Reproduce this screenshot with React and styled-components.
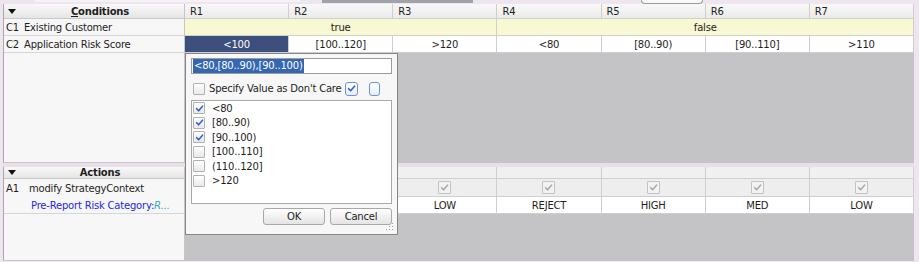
import React from "react";
import styled, { createGlobalStyle } from "styled-components";

const Global = createGlobalStyle`
  html, body { margin: 0; padding: 0; background: #ede6ee; }
  body {
    font-family: "DejaVu Sans", "Noto Sans", sans-serif;
    font-size: 10px;
    letter-spacing: -0.2px;
    color: #1e1e1e;
  }
  #root { width: 919px; height: 262px; overflow: hidden; position: relative; }
`;

const Page = styled.div`
  width: 919px;
  height: 262px;
  position: relative;
  background: #ede6ee;
`;

const TopStrip = styled.div`
  height: 4px;
  display: flex;
  align-items: flex-start;
`;

const StripBar = styled.div`
  margin-left: ${(p) => p.$ml}px;
  width: ${(p) => p.$w}px;
  height: ${(p) => p.$h || 3}px;
  background: ${(p) => p.$bg};
  border: ${(p) => p.$border || "none"};
  border-top: none;
  border-radius: ${(p) => p.$r || 0};
  box-sizing: border-box;
`;

const Frame = styled.div`
  margin-left: 3px;
  width: 911px;
  display: flex;
  flex-direction: column;
`;

const Section = styled.div`
  display: flex;
  height: ${(p) => p.$h}px;
  box-sizing: border-box;
`;

const Gap = styled.div`
  height: 4px;
  background: #eadfe9;
`;

const LeftPanel = styled.div`
  width: 182px;
  flex: none;
  box-sizing: border-box;
  background: #f7f7f7;
  border-left: 1px solid #a9a9a9;
  border-right: 1px solid #c6c6c6;
  border-bottom: 1px solid #c6c6c6;
  display: flex;
  flex-direction: column;
`;

const RightPanel = styled.div`
  flex: 1;
  background: #c4c3c6;
  display: flex;
  flex-direction: column;
`;

const PanelHeader = styled.div`
  height: ${(p) => p.$h}px;
  flex: none;
  box-sizing: border-box;
  background: linear-gradient(#f8f8f8, #e6e6e6);
  border-bottom: 1px solid #c9c9c9;
  display: flex;
  align-items: center;
  padding-left: 4px;
`;

const Triangle = styled.span`
  width: 0;
  height: 0;
  border-left: 4px solid transparent;
  border-right: 4px solid transparent;
  border-top: 5px solid #111;
  flex: none;
`;

const HeaderLabel = styled.span`
  flex: 1;
  text-align: center;
  font-weight: bold;
  padding-right: ${(p) => p.$pr || 0}px;
`;

const Mnemonic = styled.span`
  text-decoration: underline;
`;

const LeftRow = styled.div`
  height: ${(p) => p.$h || 17}px;
  flex: none;
  box-sizing: border-box;
  border-bottom: ${(p) => (p.$noLine ? "none" : "1px solid #d6d6d6")};
  display: flex;
  align-items: center;
  padding-left: ${(p) => p.$pl || 2}px;
  white-space: nowrap;
`;

const Code = styled.span`
  width: ${(p) => p.$w}px;
  flex: none;
`;

const BlueText = styled.span`
  color: #2626e6;
`;

const TealText = styled.span`
  color: #35a9c4;
  font-style: italic;
`;

const Grid = styled.div`
  display: grid;
  grid-template-columns: repeat(7, 1fr);
  height: ${(p) => p.$h}px;
  flex: none;
  box-sizing: border-box;
  background: ${(p) => p.$bg};
  border-bottom: 1px solid #cfcfcf;
`;

const Cell = styled.div`
  grid-column: span ${(p) => p.$span || 1};
  border-right: 1px solid #cfcfcf;
  display: flex;
  align-items: center;
  justify-content: ${(p) => (p.$left ? "flex-start" : "center")};
  padding-left: ${(p) => (p.$left ? 5 : 0)}px;
  background: ${(p) => (p.$selected ? "#3d4f7d" : "transparent")};
  color: ${(p) => (p.$selected ? "#ffffff" : "#1e1e1e")};
  white-space: nowrap;
  overflow: hidden;
  min-width: 0;
`;

const MiniBox = styled.span`
  width: ${(p) => p.$size || 12}px;
  height: ${(p) => p.$size || 12}px;
  box-sizing: border-box;
  flex: none;
  border: 1px solid ${(p) => (p.$disabled ? "#c2c2c2" : "#b2b2b2")};
  border-radius: 1px;
  background: ${(p) =>
    p.$disabled ? "#f3f3f3" : "linear-gradient(#ffffff, #e9e9e9)"};
  display: inline-flex;
  align-items: center;
  justify-content: center;
`;

const Check = ({ color = "#2f5fd6", size = 10 }) => (
  <svg width={size} height={size} viewBox="0 0 10 10">
    <path
      d="M1.8 5.2 L4 7.6 L8.4 2.4"
      fill="none"
      stroke={color}
      strokeWidth="1.7"
      strokeLinecap="round"
      strokeLinejoin="round"
    />
  </svg>
);

/* ---------- popup ---------- */

const Popup = styled.div`
  position: absolute;
  left: 185px;
  top: 53px;
  width: 213px;
  height: 182px;
  box-sizing: border-box;
  background: #f7f7f7;
  border: 1px solid #858585;
  padding: 4px 5px 0 5px;
  display: flex;
  flex-direction: column;
`;

const TextBox = styled.div`
  height: 16px;
  box-sizing: border-box;
  border: 1px solid #9c9c9c;
  background: #fff;
  display: flex;
  align-items: center;
  padding-left: 1px;
`;

const Selected = styled.span`
  background: #3566b2;
  color: #fff;
  padding: 1px 1px;
  line-height: 12px;
`;

const SpecifyRow = styled.div`
  margin-top: 8px;
  height: 13px;
  display: flex;
  align-items: center;
  padding-left: 2px;
  gap: 4px;
`;

const SpecifyLabel = styled.span`
  flex: 1;
  white-space: nowrap;
`;

const ToolBtn = styled.span`
  width: ${(p) => p.$w}px;
  height: 14px;
  box-sizing: border-box;
  border: 1px solid #6e93d3;
  border-radius: 3px;
  background: linear-gradient(#ffffff, #e8eef8);
  display: inline-flex;
  align-items: center;
  justify-content: center;
  margin-right: ${(p) => p.$mr || 0}px;
`;

const ListBox = styled.div`
  margin-top: 5px;
  height: 104px;
  box-sizing: border-box;
  border: 1px solid #a9a9a9;
  background: #fff;
  padding-top: 0;
  display: flex;
  flex-direction: column;
`;

const ListItem = styled.div`
  height: 14.5px;
  flex: none;
  display: flex;
  align-items: center;
  padding-left: 1px;
  gap: 7px;
  white-space: nowrap;
`;

const ButtonRow = styled.div`
  margin-top: 4px;
  display: flex;
  justify-content: flex-end;
  gap: 5px;
`;

const Button = styled.button`
  width: 62px;
  height: 17px;
  box-sizing: border-box;
  border: 1px solid #a8a8a8;
  border-radius: 3px;
  background: linear-gradient(#ffffff, #e4e4e4);
  font-family: "DejaVu Sans", "Noto Sans", sans-serif;
  font-size: 10px;
  letter-spacing: -0.2px;
  color: #1e1e1e;
  padding: 0;
`;

const Grip = styled.svg`
  position: absolute;
  right: 3px;
  bottom: 3px;
`;

const conditionsCols = ["R1", "R2", "R3", "R4", "R5", "R6", "R7"];
const c2Values = ["<100", "[100..120]", ">120", "<80", "[80..90)", "[90..110]", ">110"];
const actionValues = ["HIGH", "MED", "LOW", "REJECT", "HIGH", "MED", "LOW"];
const popupItems = [
  ["<80", true],
  ["[80..90)", true],
  ["[90..100)", true],
  ["[100..110]", false],
  ["(110..120]", false],
  [">120", false],
];

export default function App() {
  return (
    <Page>
      <Global />
      <TopStrip>
        <StripBar $ml={35} $w={265} $h={2} $bg="#f5f1f5" />
        <StripBar $ml={22} $w={151} $h={3} $bg="#a3a2a8" />
        <StripBar $ml={168} $w={62} $h={4} $bg="#f9f9f9" $border="1px solid #9a9a9a" $r="0 0 4px 4px" />
      </TopStrip>
      <Frame>
        <Section $h={159}>
          <LeftPanel>
            <PanelHeader $h={15}>
              <Triangle />
              <HeaderLabel $pr={0}>
                <Mnemonic>C</Mnemonic>onditions
              </HeaderLabel>
            </PanelHeader>
            <LeftRow>
              <Code $w={18}>C1</Code>Existing Customer
            </LeftRow>
            <LeftRow>
              <Code $w={18}>C2</Code>Application Risk Score
            </LeftRow>
          </LeftPanel>
          <RightPanel>
            <Grid $h={15} $bg="linear-gradient(#f8f8f8, #ebebeb)">
              {conditionsCols.map((c) => (
                <Cell key={c} $left>
                  {c}
                </Cell>
              ))}
            </Grid>
            <Grid $h={17} $bg="#f8f8d3">
              <Cell $span={3}>true</Cell>
              <Cell $span={4}>false</Cell>
            </Grid>
            <Grid $h={17} $bg="#ffffff">
              {c2Values.map((v, i) => (
                <Cell key={i} $selected={i === 0}>
                  {v}
                </Cell>
              ))}
            </Grid>
          </RightPanel>
        </Section>
        <Gap />
        <Section $h={94}>
          <LeftPanel>
            <PanelHeader $h={12}>
              <Triangle />
              <HeaderLabel>Actions</HeaderLabel>
            </PanelHeader>
            <LeftRow $h={18} $noLine>
              <Code $w={23}>A1</Code>modify StrategyContext
            </LeftRow>
            <LeftRow $h={17} $pl={27}>
              <BlueText>Pre-Report Risk Category:</BlueText>
              <TealText>R...</TealText>
            </LeftRow>
          </LeftPanel>
          <RightPanel>
            <Grid $h={12} $bg="#f0f0f0">
              {conditionsCols.map((c) => (
                <Cell key={c} />
              ))}
            </Grid>
            <Grid $h={18} $bg="#eeeeee">
              {conditionsCols.map((c) => (
                <Cell key={c}>
                  <MiniBox $disabled $size={13}>
                    <Check color="#a9a9a9" size={9} />
                  </MiniBox>
                </Cell>
              ))}
            </Grid>
            <Grid $h={17} $bg="#ffffff">
              {actionValues.map((v, i) => (
                <Cell key={i}>{v}</Cell>
              ))}
            </Grid>
          </RightPanel>
        </Section>
      </Frame>

      <Popup>
        <TextBox>
          <Selected>&lt;80,[80..90),[90..100)</Selected>
        </TextBox>
        <SpecifyRow>
          <MiniBox />
          <SpecifyLabel>Specify Value as Don't Care</SpecifyLabel>
          <ToolBtn $w={14} $mr={7}>
            <Check size={9} />
          </ToolBtn>
          <ToolBtn $w={13} $mr={12} />
        </SpecifyRow>
        <ListBox>
          {popupItems.map(([label, checked]) => (
            <ListItem key={label}>
              <MiniBox>{checked && <Check size={9} />}</MiniBox>
              <span>{label}</span>
            </ListItem>
          ))}
        </ListBox>
        <ButtonRow>
          <Button>OK</Button>
          <Button>Cancel</Button>
        </ButtonRow>
        <Grip width="8" height="8" viewBox="0 0 8 8">
          <g fill="#9a9a9a">
            <rect x="6" y="0" width="1" height="1" />
            <rect x="3" y="3" width="1" height="1" />
            <rect x="6" y="3" width="1" height="1" />
            <rect x="0" y="6" width="1" height="1" />
            <rect x="3" y="6" width="1" height="1" />
            <rect x="6" y="6" width="1" height="1" />
          </g>
        </Grip>
      </Popup>
    </Page>
  );
}
